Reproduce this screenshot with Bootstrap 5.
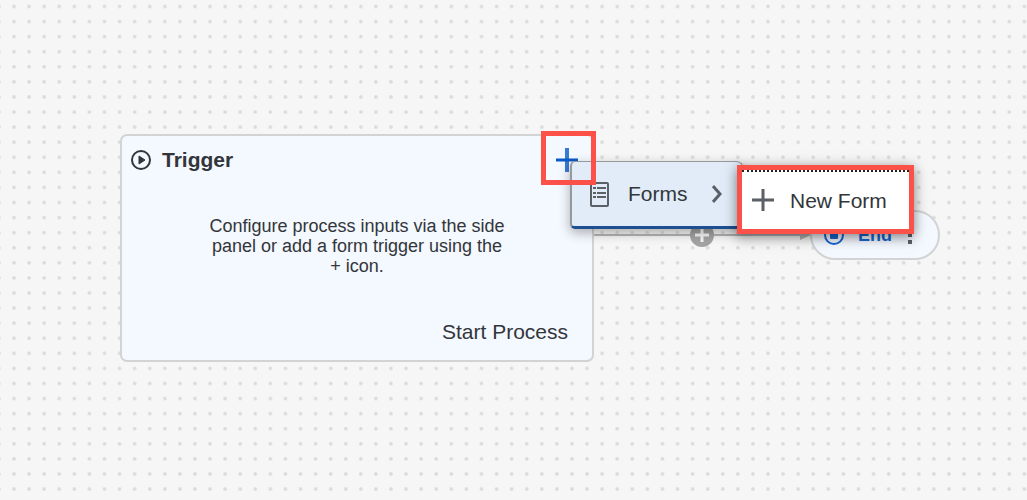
<!DOCTYPE html>
<html lang="en">
<head>
<meta charset="utf-8">
<meta name="viewport" content="width=device-width, initial-scale=1">
<title>Process Builder</title>
<link rel="stylesheet" href="https://cdn.jsdelivr.net/npm/bootstrap@5.3.0/dist/css/bootstrap.min.css">
<style>
  body { font-family: "Liberation Sans", Arial, sans-serif; color: #32363a; background: #f6f6f6; }
  .flow-canvas { min-height: 100vh; }
  .canvas-item { position: absolute; }
  .grid-dots { inset: 0; }
  svg { display: block; flex: none; }

  .node-trigger { left: 120px; top: 134px; width: 474px; min-height: 228px; background: #f4f8ff; border: 2px solid #d2d3d4; border-radius: 7px; }
  .node-title { font-size: 21px; line-height: 24px; }
  .node-hint { font-size: 18px; line-height: 20px; width: 300px; }
  .node-label { font-size: 21px; line-height: 24px; }
  .node-end { left: 810px; top: 210px; width: 130px; height: 50px; background: #f4f8ff; border: 2px solid #d2d3d4; color: #1767d2; font-size: 18px; }
  .add-btn { left: 554px; top: 147px; }
  .connector { left: 594px; top: 222px; }

  .menu-forms { left: 570px; top: 161px; width: 174px; height: 68px; background: #e1ecf8; border: 1px solid #96999c; border-left-width: 2px; border-bottom: 3px solid #1d4f91; border-radius: 5px 8px 3px 5px; box-shadow: 0 4px 12px rgba(0,0,0,.3); }
  .menu-new { left: 737px; top: 165px; width: 177px; height: 69px; background: #fff; box-shadow: 0 3px 12px rgba(0,0,0,.5); }
  .menu-item { font-size: 21px; line-height: 24px; color: #32363a; }
  .focus-line { border-top: 2px dotted #222; }
  .callout-box { border: 5px solid #fb5149; }
  .callout-new { border: 5px solid #fb5149; }
  .callout-add { left: 541px; top: 131px; width: 55px; height: 54px; pointer-events: none; }
</style>
</head>
<body>
<main class="flow-canvas position-relative overflow-hidden">
  <svg class="canvas-item grid-dots w-100 h-100" aria-hidden="true">
    <defs>
      <pattern id="dots" x="6.5" y="-1" width="15.08" height="15.08" patternUnits="userSpaceOnUse">
        <circle cx="7.5" cy="7.5" r="1.8" fill="#dadada"/>
      </pattern>
    </defs>
    <rect width="100%" height="100%" fill="url(#dots)"/>
  </svg>

  <svg class="canvas-item connector" width="217" height="28" viewBox="0 0 217 28" aria-hidden="true">
    <path d="M0 13H207" stroke="#b5b5b5" stroke-width="2"/>
    <path d="M206 8L217 13L206 18Z" fill="#b5b5b5"/>
    <circle cx="108" cy="13" r="12" fill="#a3a3a3"/>
    <path d="M101 13H115M108 6V20" stroke="#f6f6f6" stroke-width="3"/>
  </svg>

  <section class="canvas-item node-trigger d-flex flex-column justify-content-between px-2 py-2">
    <header class="d-flex align-items-center gap-2 mt-1">
      <svg width="24" height="24" viewBox="0 0 24 24" fill="none" aria-hidden="true">
        <circle cx="11" cy="12" r="9" stroke="#32363a" stroke-width="2"/>
        <path d="M9 8L15 12L9 16Z" fill="#32363a" stroke="#32363a" stroke-linejoin="round"/>
      </svg>
      <h1 class="node-title fw-bold m-0">Trigger</h1>
    </header>
    <p class="node-hint text-center mx-auto mb-0">Configure process inputs via the side panel or add a form trigger using the +&nbsp;icon.</p>
    <p class="node-label text-end mb-2 me-3">Start Process</p>
  </section>

  <button type="button" class="canvas-item add-btn btn border-0 p-0" aria-label="Add trigger">
    <svg width="26" height="26" viewBox="0 0 26 26" aria-hidden="true">
      <path d="M13 1V25" stroke="#397ad2" stroke-width="4"/>
      <path d="M2 13H24" stroke="#0a5bc8" stroke-width="3"/>
    </svg>
  </button>

  <section class="canvas-item node-end rounded-pill d-flex align-items-center fw-bold px-2">
    <svg class="ms-1" width="22" height="22" viewBox="0 0 22 22" aria-hidden="true">
      <circle cx="10" cy="11" r="9" fill="none" stroke="#1767d2" stroke-width="2"/>
      <rect x="6" y="7" width="8" height="8" rx="1" fill="#1767d2"/>
    </svg>
    <span class="ms-2 ps-1">End</span>
    <svg class="ms-3" width="8" height="22" viewBox="0 0 8 22" fill="#5b6066" aria-hidden="true">
      <rect x="0" y="2" width="4" height="4"/><rect x="0" y="9" width="4" height="4"/><rect x="0" y="16" width="4" height="4"/>
    </svg>
  </section>

  <button type="button" class="canvas-item menu-forms menu-item d-flex align-items-center p-0 ps-3">
    <svg width="24" height="28" viewBox="0 0 24 28" fill="none" stroke="#5b6066" aria-hidden="true">
      <rect x="3" y="3" width="17" height="23" rx="1" stroke-width="2"/>
      <path d="M5 8H8M5 13H8M5 17H8M9 8H18M9 13H18M9 17H18" stroke-width="2"/>
    </svg>
    <span class="ms-3">Forms</span>
    <svg class="ms-4" width="12" height="20" viewBox="0 0 12 20" fill="none" stroke="#5b6066" stroke-width="3" aria-hidden="true">
      <path d="M1 2L8 10L1 18"/>
    </svg>
  </button>

  <div class="canvas-item menu-new callout-new d-flex flex-column">
    <div class="focus-line"></div>
    <button type="button" class="menu-item btn border-0 rounded-0 flex-grow-1 d-flex align-items-center p-0 ps-2">
      <svg width="24" height="24" viewBox="0 0 24 24" stroke="#5b6066" stroke-width="3" aria-hidden="true">
        <path d="M2 11H24M13 0V22"/>
      </svg>
      <span class="ms-3">New Form</span>
    </button>
  </div>

  <div class="canvas-item callout-box callout-add" aria-hidden="true"></div>
</main>
<script src="https://cdn.jsdelivr.net/npm/bootstrap@5.3.0/dist/js/bootstrap.bundle.min.js"></script>
</body>
</html>
